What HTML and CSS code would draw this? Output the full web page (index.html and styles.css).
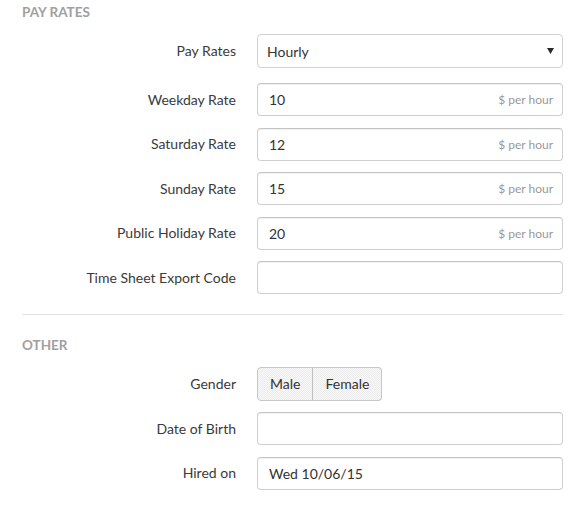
FILE: index.html
```html
<!DOCTYPE html>
<html>
<head>
<meta charset="utf-8">
<link rel="stylesheet" href="styles.css">
</head>
<body>
<div class="page">
  <section class="section">
    <h2 class="section-title">PAY RATES</h2>
    <div class="row row-select">
      <div class="label">Pay Rates</div>
      <div class="control select">
        <span class="value">Hourly</span>
        <svg class="caret" width="7" height="6" viewBox="0 0 7 6"><polygon points="0,0 7,0 3.5,6" fill="#2a2a2a"/></svg>
      </div>
    </div>
    <div class="row">
      <div class="label">Weekday Rate</div>
      <div class="control"><span class="value">10</span><span class="suffix">$ per hour</span></div>
    </div>
    <div class="row">
      <div class="label">Saturday Rate</div>
      <div class="control"><span class="value">12</span><span class="suffix">$ per hour</span></div>
    </div>
    <div class="row">
      <div class="label">Sunday Rate</div>
      <div class="control"><span class="value">15</span><span class="suffix">$ per hour</span></div>
    </div>
    <div class="row">
      <div class="label">Public Holiday Rate</div>
      <div class="control"><span class="value">20</span><span class="suffix">$ per hour</span></div>
    </div>
    <div class="row">
      <div class="label">Time Sheet Export Code</div>
      <div class="control"></div>
    </div>
  </section>
  <hr class="divider">
  <section class="section">
    <h2 class="section-title">OTHER</h2>
    <div class="row row-toggle">
      <div class="label">Gender</div>
      <div class="toggle">
        <span class="toggle-btn">Male</span><span class="toggle-btn">Female</span>
      </div>
    </div>
    <div class="row">
      <div class="label">Date of Birth</div>
      <div class="control"></div>
    </div>
    <div class="row">
      <div class="label">Hired on</div>
      <div class="control"><span class="value">Wed 10/06/15</span></div>
    </div>
  </section>
</div>
</body>
</html>
```
FILE: styles.css
```css
html, body {
  margin: 0;
  padding: 0;
  background: #fff;
}
body {
  font-family: Lato, "Open Sans", sans-serif;
  font-size: 14px;
  color: #333;
}
.page {
  padding: 2px 21px 0 22px;
}
.section-title {
  margin: 0 0 12px 0;
  font-size: 13.5px;
  line-height: 20px;
  font-weight: 700;
  color: #a0a0a0;
  letter-spacing: 0;
}
.row {
  display: grid;
  grid-template-columns: 214px 1fr;
  column-gap: 21px;
  align-items: center;
  margin-top: 11.5px;
}
.row-select + .row {
  margin-top: 15px;
}
.row-select,
.row-toggle {
  margin-top: 0;
}
.row-toggle + .row {
  margin-top: 11px;
}
.label {
  text-align: right;
  color: #3a3a3a;
  line-height: 20px;
}
.control {
  height: 33px;
  box-sizing: border-box;
  border: 1px solid #cfcfcf;
  border-top-color: #c4c4c4;
  border-radius: 4px;
  box-shadow: inset 0 1px 1px rgba(0,0,0,0.06);
  display: flex;
  align-items: center;
  padding: 0 9px 0 11px;
  background: #fff;
}
.select {
  height: 34px;
  box-shadow: none;
  border-color: #d2d2d2;
  padding-left: 9px;
  padding-right: 8px;
}
.value {
  flex: 1;
  color: #333;
}
.suffix {
  font-size: 12px;
  color: #999;
}
.caret {
  display: block;
}
.toggle {
  display: flex;
  justify-self: start;
}
.toggle-btn {
  display: block;
  height: 34px;
  box-sizing: border-box;
  line-height: 32px;
  padding: 0 12px;
  border: 1px solid #c6c6c6;
  color: #333;
  background: repeating-conic-gradient(#ececec 0 25%, #f8f8f8 0 50%) 0 0 / 2px 2px;
}
.toggle-btn:first-child {
  border-radius: 4px 0 0 4px;
}
.toggle-btn + .toggle-btn {
  border-left: 1px solid #c0c0c0;
  margin-left: -1px;
  border-radius: 0 4px 4px 0;
}
.divider {
  border: none;
  border-top: 1px solid #e3e3e3;
  margin: 20px 0 20px 0;
  height: 0;
}
```
